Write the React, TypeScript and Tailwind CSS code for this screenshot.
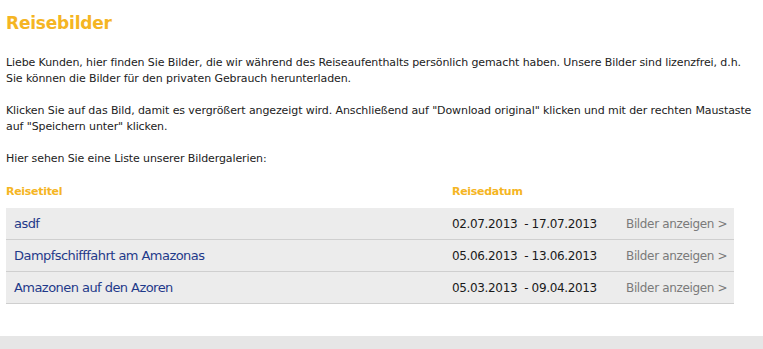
const rows = [
  { title: "asdf", from: "02.07.2013", to: "17.07.2013" },
  { title: "Dampfschifffahrt am Amazonas", from: "05.06.2013", to: "13.06.2013" },
  { title: "Amazonen auf den Azoren", from: "05.03.2013", to: "09.04.2013" },
];

export default function App() {
  return (
    <div className="min-h-[349px] bg-white flex flex-col font-['DejaVu_Sans',sans-serif]">
      <main className="flex-1 pl-[6px] pr-[4px] pt-[12px]">
        {/* Title */}
        <h1 className="text-[17px] leading-[22px] font-bold text-[#f5b523] tracking-[-0.2px]">
          Reisebilder
        </h1>

        {/* Intro text */}
        <div className="mt-[21px] text-[11px] leading-[16px] text-[#222] tracking-[-0.1px]">
          <p>
            Liebe Kunden, hier finden Sie Bilder, die wir während des Reiseaufenthalts persönlich gemacht haben. Unsere Bilder sind lizenzfrei, d.h. Sie können die Bilder für den privaten Gebrauch herunterladen.
          </p>
          <p className="mt-[16px]">
            Klicken Sie auf das Bild, damit es vergrößert angezeigt wird. Anschließend auf "Download original" klicken und mit der rechten Maustaste auf "Speichern unter" klicken.
          </p>
          <p className="mt-[16px]">Hier sehen Sie eine Liste unserer Bildergalerien:</p>
        </div>

        {/* Table */}
        <div className="mt-[15px] w-[728px]">
          <div className="flex h-[20px] items-center text-[11px] font-bold text-[#f5b523] tracking-[-0.3px]">
            <div className="w-[446px]">Reisetitel</div>
            <div>Reisedatum</div>
          </div>
          <div className="mt-[6px]">
            {rows.map((r) => (
              <div
                key={r.title}
                className="flex h-[32px] items-center bg-[#ececec] border-b border-[#cfcfcf]"
              >
                <a className="w-[446px] pl-[8px] text-[13px] text-[#1f3a8a] tracking-[-0.55px]">{r.title}</a>
                <div className="w-[174px] text-[12px] text-[#1a1a1a] tracking-[-0.35px] whitespace-pre">
                  {r.from}  - {r.to}
                </div>
                <a className="text-[12px] text-[#7a7a7a] tracking-[-0.35px]">Bilder anzeigen &gt;</a>
              </div>
            ))}
          </div>
        </div>
      </main>

      {/* Footer strip */}
      <footer className="h-[13px] bg-[#e6e6e6]" />
    </div>
  );
}
